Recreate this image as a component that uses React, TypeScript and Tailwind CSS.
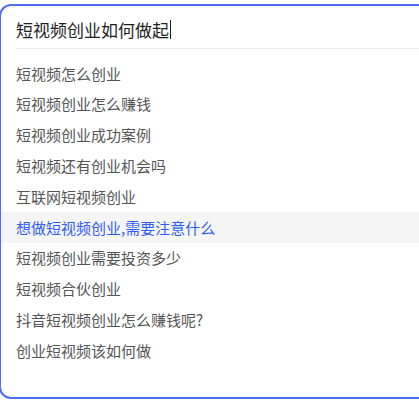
import React from "react";

const suggestions = [
  "短视频怎么创业",
  "短视频创业怎么赚钱",
  "短视频创业成功案例",
  "短视频还有创业机会吗",
  "互联网短视频创业",
  "想做短视频创业,需要注意什么",
  "短视频创业需要投资多少",
  "短视频合伙创业",
  "抖音短视频创业怎么赚钱呢?",
  "创业短视频该如何做",
];

export default function App() {
  return (
    <div
      className="h-[400px] w-[419px] overflow-hidden bg-white"
      style={{ fontFamily: '"Microsoft YaHei", "Noto Sans CJK SC", sans-serif' }}
    >
      <div className="ml-[-1px] mt-[4px] h-[395px] w-[440px] rounded-l-[12px] border-2 border-[#4e6ef2] bg-white">
        <div className="flex h-[42px] items-center pl-[15px] pt-[5px]">
          <span className="text-[17px] leading-none text-[#1f1f1f]">短视频创业如何做起</span>
          <span className="ml-[1px] h-[19px] w-[1px] bg-[#222]" />
        </div>
        <div className="ml-[15px] h-px bg-[#ececec]" />
        <ul className="pt-[9px]">
          {suggestions.map((s, i) => (
            <li
              key={s}
              className={
                "flex h-[30.8px] items-center pl-[15px] pt-[1px] text-[15px] " +
                (i === 5 ? "bg-[#f5f5f6] text-[#315efb]" : "text-[#555]")
              }
            >
              {s}
            </li>
          ))}
        </ul>
      </div>
    </div>
  );
}
